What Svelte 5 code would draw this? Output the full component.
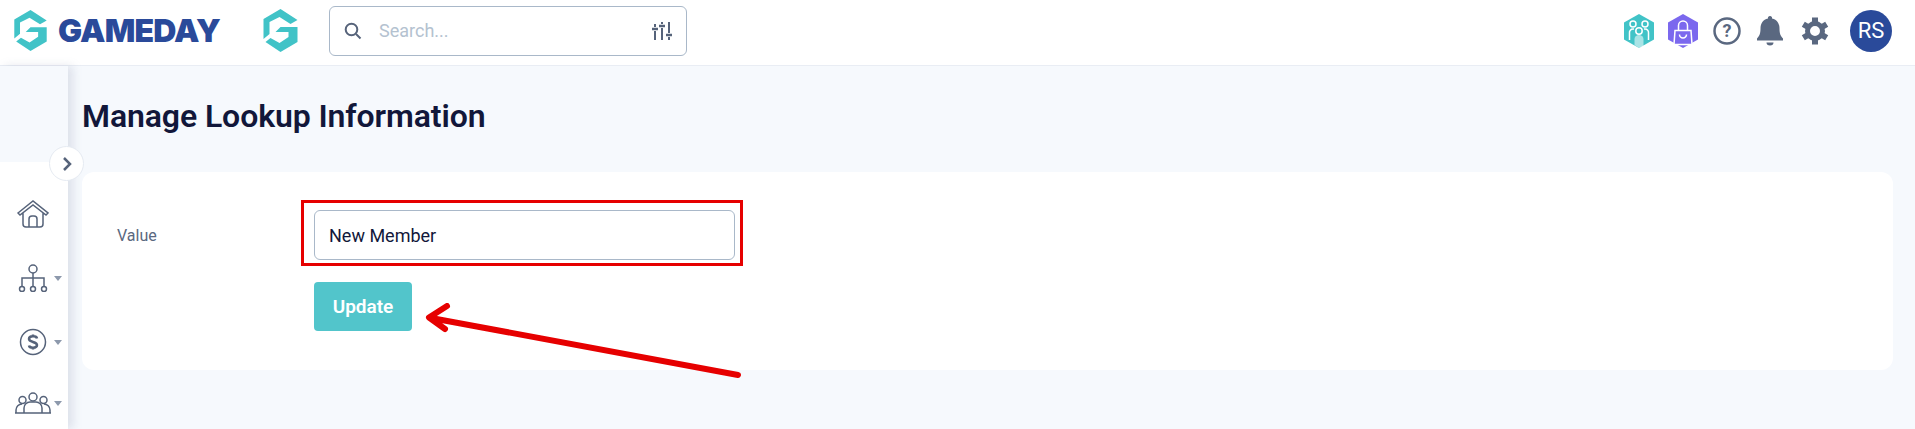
<script>
	let query = '';
	let value = 'New Member';
	const G = 'M18 0L35 11L28 15L17 8L7 13V25L1 30V10ZM3 33L18 43L35 33V18H18L13 23H26V28L17 34L8 29Z';
</script>

<div class="page">
	<header class="topbar">
		<svg class="logo" viewBox="0 0 36 43"><path d={G} /></svg>
		<span class="wordmark">GAMEDAY</span>
		<svg class="logo second" viewBox="0 0 36 43"><path d={G} /></svg>
		<div class="search">
			<svg class="ico" viewBox="0 0 18 18"><circle cx="7.5" cy="7.5" r="5.8" /><path d="M12 12l4.500 4.500" /></svg>
			<input placeholder="Search..." bind:value={query} />
			<svg class="sliders" viewBox="0 0 20 18">
				<path d="M3 2v3M3 9v9M10 0v2M10 6v12M17 0v11M17 15v3" />
				<path class="bars" d="M0 7h6M7 4h6M14 13h6" />
			</svg>
		</div>
		<div class="tools">
			<svg class="hex" viewBox="0 0 30 34">
				<path class="teal" d="M15 0l15 8.500v17L15 34 0 25.500v-17z" />
				<circle class="line" cx="9" cy="10" r="3" />
				<circle class="line" cx="21" cy="10" r="3" />
				<path class="line" d="M5.500 26v-7a3.500 3.500 0 0 1 3.500-4h1M24.500 26v-7a3.500 3.500 0 0 0-3.500-4h-1" />
				<circle class="line" cx="15" cy="17" r="3.200" />
				<path class="fill" d="M10.500 31v-6a4.500 4 0 0 1 9 0v7L15 34z" />
			</svg>
			<svg class="hex" viewBox="0 0 30 34">
				<path class="purple" d="M15 0l15 8.500v17L15 34 0 25.500v-17z" />
				<path class="line" d="M10.500 17v-5.500a4.500 4.500 0 0 1 9 0V17" />
				<path class="bag" d="M7 16.500h16l1 14H6z" />
				<path class="line" d="M11.500 20.500a3.500 3.500 0 0 0 7 0" />
			</svg>
			<svg class="help" viewBox="0 0 28 28">
				<circle cx="14" cy="14" r="12.500" />
				<text x="14" y="20" text-anchor="middle">?</text>
			</svg>
			<svg class="bell" viewBox="0 0 26 30">
				<path d="M13 0a2 2 0 0 1 2 2.500c5 1 7.500 5 7.500 10 0 5 1 7.500 3.500 10v2H0v-2c2.500-2.500 3.500-5 3.500-10 0-5 2.500-9 7.500-10A2 2 0 0 1 13 0z" />
				<path d="M9.500 26.500h7a3.500 3 0 0 1-7 0z" />
			</svg>
			<svg class="gear" viewBox="0 0 28 28">
				<circle cx="14" cy="14" r="7.500" />
				<path class="teeth" d="M14 0.500v5M14 22.500v5M2.300 7.250l4.300 2.500M21.400 18.250l4.300 2.500M2.300 20.750l4.300-2.500M21.400 9.750l4.300-2.500" />
			</svg>
			<div class="avatar">RS</div>
		</div>
	</header>

	<div class="layout">
		<aside class="side">
			<button class="toggle" aria-label="Toggle menu">
				<svg viewBox="0 0 12 16"><path d="M3 2l6 6-6 6" /></svg>
			</button>
			<nav>
				<svg class="nav-ico" viewBox="0 0 32 28">
					<path d="M1 13L16 1l15 12-2 2L16 5 3 15zM6 13v11a3 3 0 0 0 3 3h14a3 3 0 0 0 3-3V13M12 27v-8a3 3 0 0 1 3-3h2a3 3 0 0 1 3 3v8" />
				</svg>
				<div class="nav-item">
					<svg class="nav-ico" viewBox="0 0 32 28">
						<circle cx="16" cy="5" r="4" /><circle cx="5" cy="25" r="2.500" /><circle cx="16" cy="25" r="2.500" /><circle cx="27" cy="25" r="2.500" />
						<path d="M16 9v13.500M5 22.500V14h22v8.500" />
					</svg>
					<span class="caret"></span>
				</div>
				<div class="nav-item">
					<svg class="nav-ico" viewBox="0 0 32 28">
						<circle cx="16" cy="14" r="12.500" />
						<path class="thick" d="M20 10.500c-.5-3-8-3-8 .5s8 2.500 8 6-7.500 3.500-8 .5M16 6.500v2M16 19.500v2" />
					</svg>
					<span class="caret"></span>
				</div>
				<div class="nav-item">
					<svg class="nav-ico wide" viewBox="0 0 36 22">
						<circle cx="7.500" cy="8" r="3.500" /><circle cx="18" cy="5" r="4" /><circle cx="28.500" cy="8" r="3.500" />
						<path d="M1 21v-3a6 6 0 0 1 6-6M35 21v-3a6 6 0 0 0-6-6M9 21v-5a6 6 0 0 1 6-6h6a6 6 0 0 1 6 6v5M0 21h36" />
					</svg>
					<span class="caret"></span>
				</div>
			</nav>
		</aside>

		<main class="content">
			<h1>Manage Lookup Information</h1>
			<section class="card">
				<div class="row">
					<label for="lookup-value">Value</label>
					<input id="lookup-value" class="text" bind:value={value} />
				</div>
				<button class="update">Update</button>
			</section>
		</main>
	</div>

	<!-- annotation drawn over the screenshot -->
	<div class="highlight"></div>
	<svg class="arrow" viewBox="0 0 330 80">
		<path d="M319 72L12 15M28 3L10 14.500 26 26" />
	</svg>
</div>

<style>
	:global(body) {
		margin: 0;
		background: #f6f9fd;
	}

	.page {
		position: relative;
		height: 429px;
		overflow: hidden;
		font-family: Roboto, 'Liberation Sans', sans-serif;
		color: #5a6880;
	}

	.topbar {
		display: flex;
		align-items: center;
		height: 61px;
		background: #fff;
		border-bottom: 1px solid #e9edf4;
		padding: 0 23px 4px 13px;
	}

	.logo {
		width: 35px;
		height: 41px;
		flex: none;
	}
	.logo path {
		fill: #41c3c7;
	}
	.logo.second {
		width: 37px;
		height: 43px;
		margin-left: 42px;
	}

	.wordmark {
		margin-left: 10px;
		width: 162px;
		font-family: Inter, sans-serif;
		font-weight: 900;
		font-size: 32px;
		letter-spacing: -0.8px;
		color: #2a4a9a;
	}

	.search {
		display: flex;
		align-items: center;
		width: 358px;
		height: 50px;
		box-sizing: border-box;
		margin-left: 30px;
		padding: 0 14px 0 14px;
		border: 1px solid #a9b8c9;
		border-radius: 6px;
	}
	.search input {
		flex: 1;
		min-width: 0;
		margin-left: 15px;
		border: 0;
		outline: 0;
		font: 18px Roboto, sans-serif;
		color: #5a6880;
	}
	.search input::placeholder {
		color: #b4c2d0;
	}

	.ico {
		width: 18px;
		height: 18px;
		flex: none;
		fill: none;
		stroke: #56637a;
		stroke-width: 2;
	}
	.sliders {
		width: 20px;
		height: 18px;
		flex: none;
		fill: none;
		stroke: #56637a;
		stroke-width: 2;
	}
	.sliders .bars {
		stroke-width: 2.500;
	}

	.tools {
		display: flex;
		align-items: center;
		margin-left: auto;
	}

	.hex {
		width: 30px;
		height: 34px;
		margin-right: 14px;
	}
	.teal { fill: #41c3c7; }
	.purple { fill: #7b68ee; }
	.line {
		fill: none;
		stroke: #fff;
		stroke-width: 1.500;
	}
	.fill { fill: #fff; opacity: 0.55; }
	.bag {
		fill: #7b68ee;
		stroke: #fff;
		stroke-width: 1.500;
	}

	.help {
		width: 28px;
		height: 28px;
		margin-left: 1px;
		margin-right: 16px;
		fill: none;
		stroke: #5a6880;
		stroke-width: 2.500;
	}
	.help text {
		fill: #5a6880;
		stroke: none;
		font: 700 18px Roboto, sans-serif;
	}

	.bell {
		width: 26px;
		height: 30px;
		margin-right: 18px;
		fill: #5a6880;
	}

	.gear {
		width: 28px;
		height: 28px;
		margin-right: 21px;
		fill: none;
		stroke: #5a6880;
		stroke-width: 5;
	}
	.teeth {
		stroke-width: 6;
	}

	.avatar {
		display: flex;
		align-items: center;
		justify-content: center;
		width: 42px;
		height: 42px;
		border-radius: 50%;
		background: #2a4a9a;
		color: #fff;
		font-size: 22px;
	}

	.layout {
		display: flex;
		height: 363px;
	}

	.side {
		position: relative;
		flex: none;
		width: 68px;
		padding-top: 96px;
		box-sizing: border-box;
		box-shadow: 5px 0 9px rgba(120, 130, 160, 0.2);
	}
	.side nav {
		display: flex;
		flex-direction: column;
		height: 100%;
		padding-top: 38px;
		box-sizing: border-box;
		background: #fff;
		row-gap: 36px;
	}

	.toggle {
		position: absolute;
		top: 80px;
		left: 49px;
		z-index: 2;
		width: 35px;
		height: 35px;
		padding: 0;
		display: flex;
		align-items: center;
		justify-content: center;
		background: #fff;
		border: 1px solid #e6ebf2;
		border-radius: 50%;
	}
	.toggle svg {
		width: 12px;
		height: 16px;
		fill: none;
		stroke: #56637a;
		stroke-width: 2.500;
	}

	.nav-item {
		display: flex;
		align-items: center;
	}
	.nav-ico {
		display: block;
		flex: none;
		width: 32px;
		height: 28px;
		margin-left: 17px;
		fill: none;
		stroke: #56637a;
		stroke-width: 1.500;
	}
	.nav-ico.wide {
		width: 36px;
		height: 22px;
		margin-left: 15px;
	}
	.thick {
		stroke-width: 2.500;
	}
	.caret {
		margin-left: 5px;
		border: 4px solid transparent;
		border-top: 5px solid #8d99ac;
		border-bottom: 0;
	}
	.wide + .caret {
		margin-left: 3px;
	}

	.content {
		flex: 1;
		min-width: 0;
		padding: 0 22px 0 14px;
	}

	h1 {
		margin: 0;
		padding-top: 32px;
		height: 74px;
		box-sizing: content-box;
		font-size: 32px;
		font-weight: 600;
		line-height: 36px;
		letter-spacing: -0.1px;
		color: #12173a;
	}

	.card {
		height: 198px;
		box-sizing: border-box;
		padding: 38px 0 0 35px;
		background: #fff;
		border-radius: 12px;
	}

	.row {
		display: flex;
		align-items: center;
	}
	label {
		width: 197px;
		font-size: 16px;
	}
	.text {
		width: 421px;
		height: 50px;
		box-sizing: border-box;
		padding: 0 14px;
		border: 1px solid #a9b8c9;
		border-radius: 6px;
		font: 18px Roboto, sans-serif;
		color: #12173a;
		outline: 0;
	}

	.update {
		display: block;
		width: 98px;
		height: 49px;
		margin: 22px 0 0 197px;
		border: 0;
		border-radius: 4px;
		background: #52c5cb;
		color: #fff;
		font: 600 19px Roboto, sans-serif;
	}

	.highlight {
		position: absolute;
		left: 301px;
		top: 200px;
		width: 442px;
		height: 66px;
		box-sizing: border-box;
		border: 3px solid #e60000;
	}

	.arrow {
		position: absolute;
		left: 419px;
		top: 303px;
		width: 330px;
		height: 80px;
		fill: none;
		stroke: #e60000;
		stroke-width: 6;
		stroke-linecap: round;
		stroke-linejoin: round;
	}
</style>
